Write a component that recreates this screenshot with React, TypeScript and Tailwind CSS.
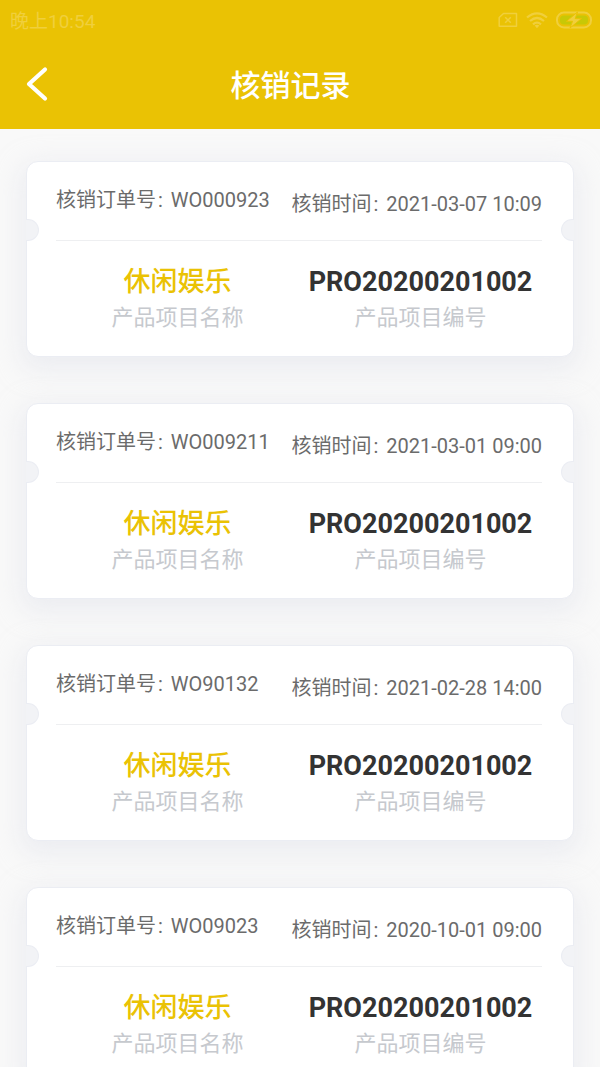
import type { ReactNode } from 'react';

interface VerificationRecord {
  orderNo: string;
  time: string;
  projectName: string;
  projectNo: string;
}

const records: VerificationRecord[] = [
  { orderNo: 'WO000923', time: '2021-03-07 10:09', projectName: '休闲娱乐', projectNo: 'PRO20200201002' },
  { orderNo: 'WO009211', time: '2021-03-01 09:00', projectName: '休闲娱乐', projectNo: 'PRO20200201002' },
  { orderNo: 'WO90132', time: '2021-02-28 14:00', projectName: '休闲娱乐', projectNo: 'PRO20200201002' },
  { orderNo: 'WO09023', time: '2020-10-01 09:00', projectName: '休闲娱乐', projectNo: 'PRO20200201002' },
];

function StatusBar() {
  return (
    <div className="flex h-10 items-center justify-between pl-2.5 pr-2 text-[#f0cf3c]">
      <span className="pt-1 text-[19px] leading-6">晚上10:54</span>
      <div className="flex items-center gap-2">
        {/* No SIM */}
        <svg width="20" height="16" viewBox="0 0 20 16" fill="none" stroke="currentColor" strokeWidth="1.5">
          <path d="M5.5 1.5H18.5V14.3H1.2V5.5Z" strokeLinejoin="round" />
          <path d="M7.2 5.2L12.8 10.8M12.8 5.2L7.2 10.8" />
        </svg>
        {/* Wifi */}
        <svg width="22" height="17" viewBox="0 0 22 17" fill="none" stroke="currentColor" strokeWidth="2.2">
          <path d="M1 5.5Q11 -2.8 21 5.5" />
          <path d="M4 9Q11 3 18 9" />
          <path d="M7 12.3Q11 8.8 15 12.3" />
          <path d="M8.6 13.6Q11 11.8 13.4 13.6L11 16.2Z" fill="currentColor" stroke="none" />
        </svg>
        {/* Battery */}
        <svg width="36" height="18" viewBox="0 0 36 18" fill="none">
          <rect x="1" y="1.6" width="34" height="14.8" rx="7" stroke="currentColor" strokeWidth="2" />
          <rect x="4" y="4.6" width="28" height="8.8" rx="4" fill="#c8c806" />
          <path d="M21.5 1L10.5 10.3H16.5L14 17L25.5 7.6H19.2Z" fill="currentColor" stroke="#eac204" strokeWidth="1" />
        </svg>
      </div>
    </div>
  );
}

function Header() {
  return (
    <header className="h-[129px] shrink-0 bg-[#eac204]">
      <StatusBar />
      <div className="flex h-[88px] items-center pl-6 pr-[67px]">
        <button type="button" aria-label="返回" className="text-white">
          <svg width="24" height="36" viewBox="0 0 24 36" fill="none" stroke="currentColor" strokeWidth="4.2" strokeLinecap="round" strokeLinejoin="round">
            <path d="M21 3.5L5 18L21 32.5" />
          </svg>
        </button>
        <h1 className="flex-1 pt-1 text-center text-[30px] leading-10 font-medium text-white">核销记录</h1>
      </div>
    </header>
  );
}

function Field({ label, children }: { label: string; children: ReactNode }) {
  return (
    <div className="flex gap-2 whitespace-nowrap">
      <dt className="flex gap-0.5">
        <span>{label}</span>
        <span>:</span>
      </dt>
      <dd>{children}</dd>
    </div>
  );
}

function RecordCard({ record }: { record: VerificationRecord }) {
  return (
    <li className="relative rounded-xl border border-[#ebedf3] bg-white pl-[29px] pr-[31px] shadow-[0_8px_24px_6px_rgba(225,228,235,0.5)]">
      {/* Ticket notches */}
      <span className="absolute -left-px top-[57px] h-[22px] w-[13px] rounded-r-full border border-l-0 border-[#ebedf3] bg-[#f2f3f6]" />
      <span className="absolute -right-px top-[57px] h-[22px] w-[13px] rounded-l-full border border-r-0 border-[#ebedf3] bg-[#f2f3f6]" />

      <dl className="flex h-[79px] items-start justify-between border-b border-[#eeeff1] text-xl leading-7 text-[#6b6b6b]">
        <div className="pt-6">
          <Field label="核销订单号">{record.orderNo}</Field>
        </div>
        <div className="pt-7">
          <Field label="核销时间">{record.time}</Field>
        </div>
      </dl>

      <div className="grid grid-cols-2 pb-5 pt-[23px] text-center">
        <div>
          <p className="text-[27px] leading-9 font-medium text-[#eac204]">{record.projectName}</p>
          <p className="text-[22px] leading-9 text-[#c6c9ce]">产品项目名称</p>
        </div>
        <div>
          <p className="text-[27px] leading-9 font-bold text-[#333]">{record.projectNo}</p>
          <p className="text-[22px] leading-9 text-[#c6c9ce]">产品项目编号</p>
        </div>
      </div>
    </li>
  );
}

export default function App() {
  return (
    <div className="flex h-screen flex-col bg-[#f9f9f9] font-[Roboto,'Noto_Sans_CJK_SC',sans-serif]">
      <Header />
      <main className="min-h-0 flex-1 overflow-y-auto px-[26px] py-8 [scrollbar-width:none]">
        <ul className="flex flex-col gap-[46px]">
          {records.map((record) => (
            <RecordCard key={record.orderNo} record={record} />
          ))}
        </ul>
      </main>
    </div>
  );
}
